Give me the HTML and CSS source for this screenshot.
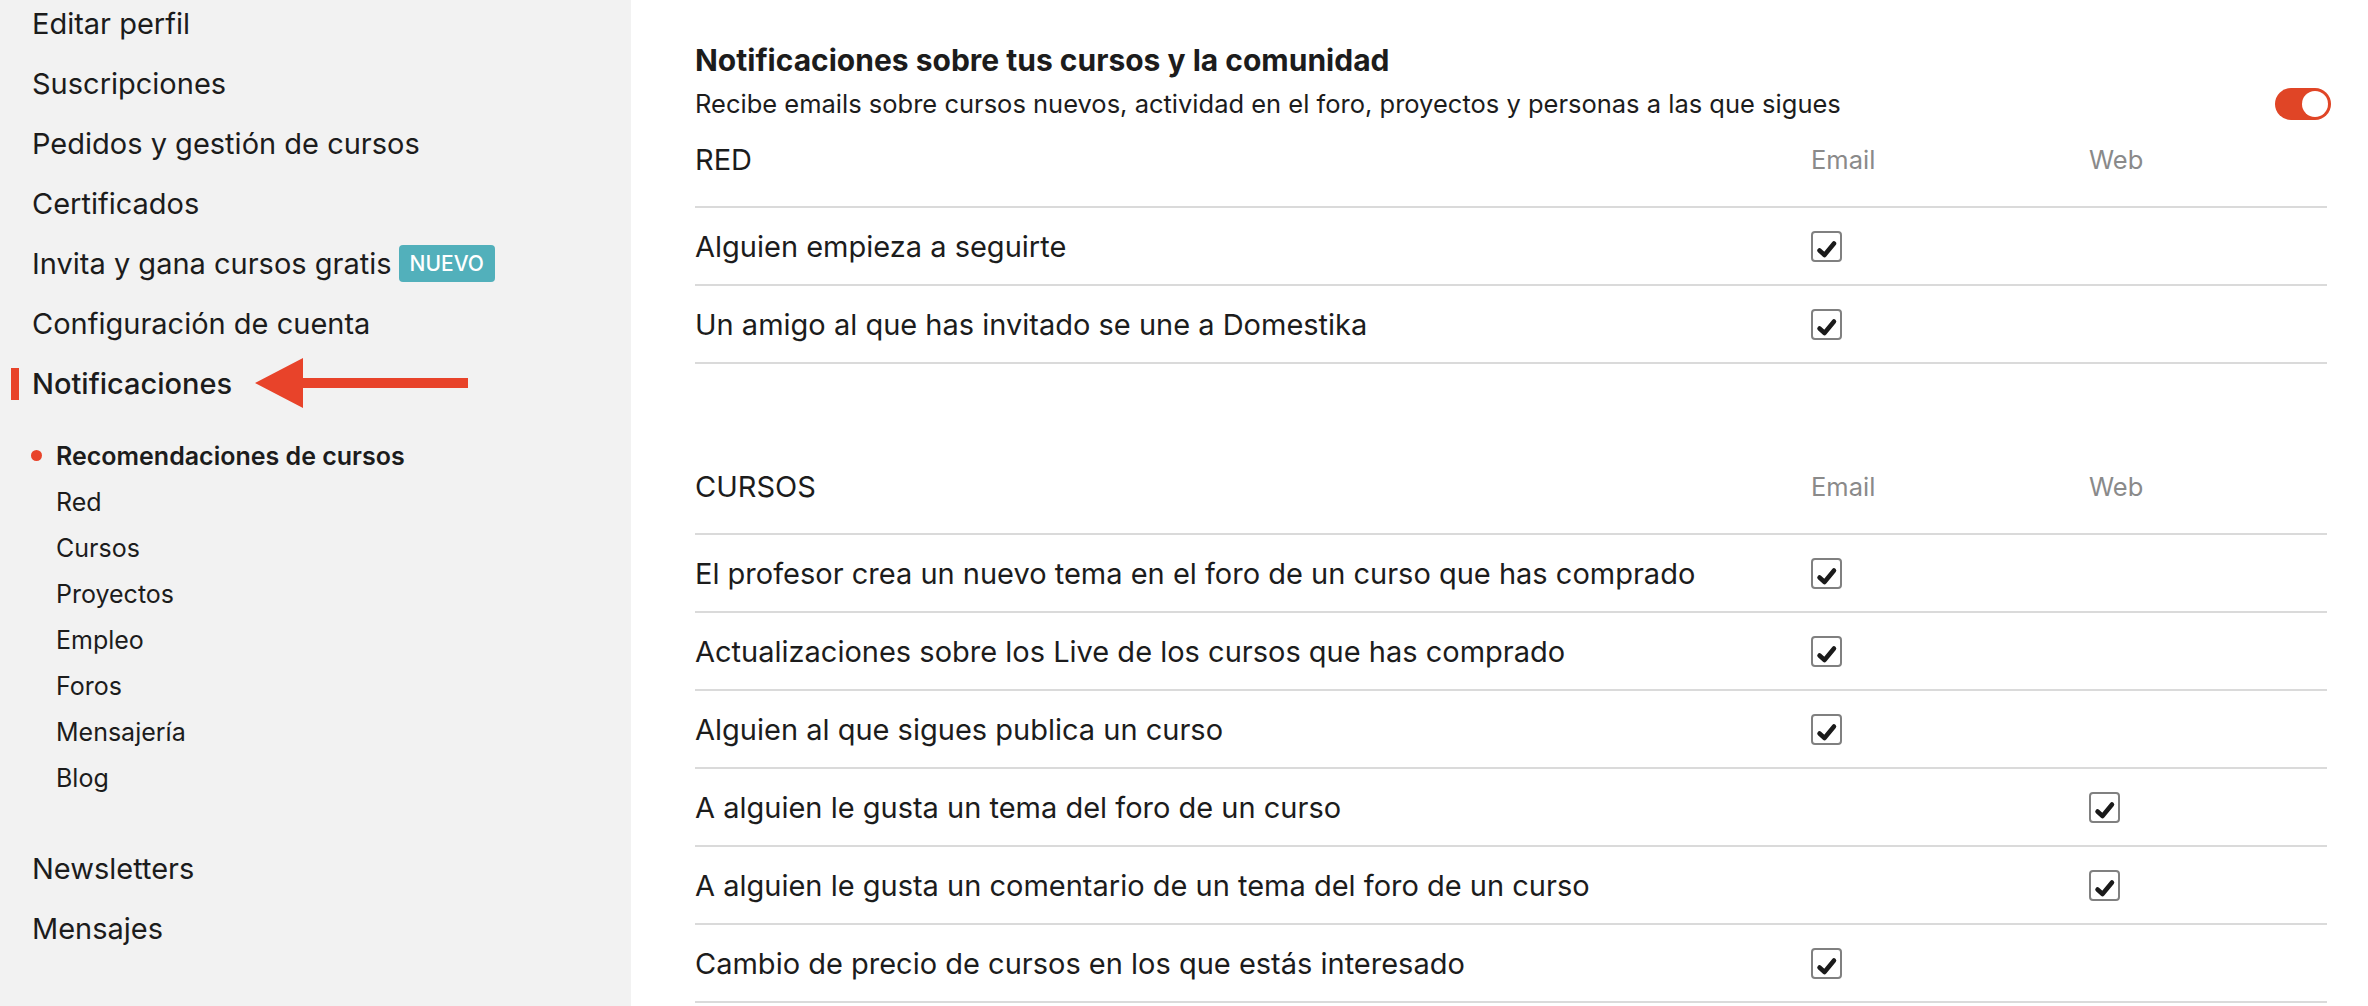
FILE: index.html
```html
<!DOCTYPE html>
<html lang="es">

<head>
    <meta charset="UTF-8">
    <meta name="viewport" content="width=device-width, initial-scale=1.0">
    <title>Notificaciones</title>
    <link rel="stylesheet" href="styles.css">
</head>

<body>
    <aside class="sidebar">
        <ul class="menu">
            <li>Editar perfil</li>
            <li>Suscripciones</li>
            <li>Pedidos y gestión de cursos</li>
            <li>Certificados</li>
            <li>Invita y gana cursos gratis <span class="badge">NUEVO</span></li>
            <li>Configuración de cuenta</li>
            <li class="active">
                Notificaciones
                <svg class="arrow" width="216" height="52" viewBox="0 0 216 52">
                    <polygon points="0,25 48,0 48,20 213,20 213,30 48,30 48,50" fill="#e8432a" />
                </svg>
            </li>
        </ul>

        <ul class="submenu">
            <li class="current">Recomendaciones de cursos</li>
            <li>Red</li>
            <li>Cursos</li>
            <li>Proyectos</li>
            <li>Empleo</li>
            <li>Foros</li>
            <li>Mensajería</li>
            <li>Blog</li>
        </ul>

        <ul class="menu menu-bottom">
            <li>Newsletters</li>
            <li>Mensajes</li>
        </ul>
    </aside>

    <main class="content">
        <h1>Notificaciones sobre tus cursos y la comunidad</h1>
        <div class="intro">
            <p>Recibe emails sobre cursos nuevos, actividad en el foro, proyectos y personas a las que sigues</p>
            <span class="toggle"><span class="knob"></span></span>
        </div>

        <section class="group">
            <div class="row head">
                <span class="label">RED</span>
                <span class="col">Email</span>
                <span class="col">Web</span>
            </div>
            <div class="row">
                <span class="label">Alguien empieza a seguirte</span>
                <span class="cell"><span class="check"></span></span>
                <span class="cell"></span>
            </div>
            <div class="row">
                <span class="label">Un amigo al que has invitado se une a Domestika</span>
                <span class="cell"><span class="check"></span></span>
                <span class="cell"></span>
            </div>
        </section>

        <section class="group">
            <div class="row head">
                <span class="label">CURSOS</span>
                <span class="col">Email</span>
                <span class="col">Web</span>
            </div>
            <div class="row">
                <span class="label">El profesor crea un nuevo tema en el foro de un curso que has comprado</span>
                <span class="cell"><span class="check"></span></span>
                <span class="cell"></span>
            </div>
            <div class="row">
                <span class="label">Actualizaciones sobre los Live de los cursos que has comprado</span>
                <span class="cell"><span class="check"></span></span>
                <span class="cell"></span>
            </div>
            <div class="row">
                <span class="label">Alguien al que sigues publica un curso</span>
                <span class="cell"><span class="check"></span></span>
                <span class="cell"></span>
            </div>
            <div class="row">
                <span class="label">A alguien le gusta un tema del foro de un curso</span>
                <span class="cell"></span>
                <span class="cell"><span class="check"></span></span>
            </div>
            <div class="row">
                <span class="label">A alguien le gusta un comentario de un tema del foro de un curso</span>
                <span class="cell"></span>
                <span class="cell"><span class="check"></span></span>
            </div>
            <div class="row">
                <span class="label">Cambio de precio de cursos en los que estás interesado</span>
                <span class="cell"><span class="check"></span></span>
                <span class="cell"></span>
            </div>
        </section>
    </main>
</body>

</html>
```

FILE: styles.css
```css
body {
    font-family: 'Inter', 'Noto Sans', sans-serif;
    margin: 0;
    padding: 0;
    display: flex;
    height: 100vh;
    overflow: hidden;
    background: #fff;
    color: #1c1c1c;
}

/* sidebar */

.sidebar {
    width: 631px;
    flex-shrink: 0;
    background: #f2f2f2;
}

.menu {
    list-style: none;
    margin: -7px 0 0;
    padding: 0;
}

.menu li {
    position: relative;
    display: flex;
    align-items: center;
    height: 60px;
    padding-left: 32px;
    font-size: 29px;
}

.menu li.active {
    font-weight: 500;
}

.menu li.active::before {
    content: '';
    position: absolute;
    left: 11px;
    top: 15px;
    width: 8px;
    height: 32px;
    background: #e8432a;
}

.arrow {
    position: absolute;
    left: 255px;
    top: 5px;
}

.badge {
    display: inline-block;
    margin-left: 7px;
    padding: 0 11px;
    height: 37px;
    line-height: 37px;
    border-radius: 4px;
    background: #52b0bb;
    color: #fff;
    font-size: 21px;
    font-weight: 500;
}

.submenu {
    list-style: none;
    margin: 20px 0 0;
    padding: 0;
}

.submenu li {
    position: relative;
    height: 46px;
    line-height: 46px;
    padding-left: 56px;
    font-size: 25px;
}

.submenu li.current {
    font-weight: 600;
}

.submenu li.current::before {
    content: '';
    position: absolute;
    left: 31px;
    top: 17px;
    width: 11px;
    height: 11px;
    border-radius: 50%;
    background: #e8432a;
}

.menu-bottom {
    margin-top: 37px;
}

/* content */

.content {
    flex: 1;
    padding: 40px 41px 0 64px;
}

h1 {
    margin: 0;
    font-size: 30px;
    font-weight: 700;
    line-height: 40px;
}

.intro {
    display: flex;
    justify-content: space-between;
    align-items: center;
    margin-top: 6px;
}

.intro p {
    margin: 0;
    font-size: 25.5px;
    line-height: 36px;
}

.toggle {
    position: relative;
    width: 56px;
    height: 32px;
    margin-right: -4px;
    border-radius: 16px;
    background: #e04526;
}

.knob {
    position: absolute;
    right: 3px;
    top: 3px;
    width: 26px;
    height: 26px;
    border-radius: 50%;
    background: #fff;
}

.group {
    margin-top: 8px;
}

.group + .group {
    margin-top: 93px;
}

.row {
    display: grid;
    grid-template-columns: 1fr 278px 238px;
    align-items: center;
    height: 76px;
    border-bottom: 2px solid #dadada;
    font-size: 29px;
}

.row.head {
    align-items: start;
    padding-top: 12px;
    height: 64px;
}

.row.head .label,
.row.head .col {
    line-height: 36px;
}

.row.head .col {
    color: #8a8a8a;
    font-size: 25.5px;
}

.cell {
    display: flex;
}

.check {
    width: 27px;
    height: 27px;
    border: 2px solid #808080;
    border-radius: 4px;
    background: #fff url("data:image/svg+xml,%3Csvg xmlns='http://www.w3.org/2000/svg' viewBox='0 0 27 27'%3E%3Cpolyline points='6.5,17.5 11.5,22 21,10.5' fill='none' stroke='%231a1a1a' stroke-width='4.5' stroke-linecap='round' stroke-linejoin='round'/%3E%3C/svg%3E") no-repeat center / 27px 27px;
}
```
